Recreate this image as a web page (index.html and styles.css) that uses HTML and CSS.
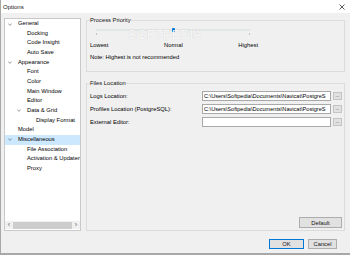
FILE: index.html
```html
<!DOCTYPE html>
<html lang="en">
<head>
  <meta charset="UTF-8">
  <title>Options</title>
  <link rel="stylesheet" href="styles.css">
</head>
<body>
  <div class="window">
    <div class="titlebar">
      <span class="title">Options</span>
      <svg class="close" width="6" height="6" viewBox="0 0 6 6">
        <path d="M0.5 0.5 L5.5 5.5 M5.5 0.5 L0.5 5.5" stroke="#333" stroke-width="0.8" fill="none"/>
      </svg>
    </div>

    <div class="content">
      <div class="tree">
        <div class="tree-items">
          <div class="row lvl0"><span class="chev"><svg width="4" height="3" viewBox="0 0 4 3"><path d="M0.3 0.5 L2 2.4 L3.7 0.5" stroke="#555" stroke-width="0.6" fill="none"/></svg></span>General</div>
          <div class="row lvl1"><span class="chev"></span>Docking</div>
          <div class="row lvl1"><span class="chev"></span>Code Insight</div>
          <div class="row lvl1"><span class="chev"></span>Auto Save</div>
          <div class="row lvl0"><span class="chev"><svg width="4" height="3" viewBox="0 0 4 3"><path d="M0.3 0.5 L2 2.4 L3.7 0.5" stroke="#555" stroke-width="0.6" fill="none"/></svg></span>Appearance</div>
          <div class="row lvl1"><span class="chev"></span>Font</div>
          <div class="row lvl1"><span class="chev"></span>Color</div>
          <div class="row lvl1"><span class="chev"></span>Main Window</div>
          <div class="row lvl1"><span class="chev"></span>Editor</div>
          <div class="row lvl1"><span class="chev"><svg width="4" height="3" viewBox="0 0 4 3"><path d="M0.3 0.5 L2 2.4 L3.7 0.5" stroke="#555" stroke-width="0.6" fill="none"/></svg></span>Data &amp; Grid</div>
          <div class="row lvl2"><span class="chev"></span>Display Format</div>
          <div class="row lvl0"><span class="chev"></span>Model</div>
          <div class="row lvl0 selected"><span class="chev"><svg width="4" height="3" viewBox="0 0 4 3"><path d="M0.3 0.5 L2 2.4 L3.7 0.5" stroke="#555" stroke-width="0.6" fill="none"/></svg></span>Miscellaneous</div>
          <div class="row lvl1"><span class="chev"></span>File Association</div>
          <div class="row lvl1"><span class="chev"></span>Activation &amp; Updater</div>
          <div class="row lvl1"><span class="chev"></span>Proxy</div>
        </div>
        <div class="hscroll">
          <span class="arrow">&#8249;</span>
          <span class="thumb"></span>
          <span class="arrow">&#8250;</span>
        </div>
      </div>

      <div class="settings">
        <fieldset class="group priority">
          <legend>Process Priority</legend>
          <div class="slider">
            <span class="knob"></span>
          </div>
          <div class="ticks"><span></span><span></span></div>
          <div class="levels">
            <span>Lowest</span>
            <span>Normal</span>
            <span>Highest</span>
          </div>
          <div class="note">Note: Highest is not recommended</div>
          <div class="watermark">SOFTPEDIA</div>
        </fieldset>

        <fieldset class="group files">
          <legend>Files Location</legend>
          <div class="paths">
            <label>Logs Location:</label>
            <div class="field">C:\Users\Softpedia\Documents\Navicat\PostgreS</div>
            <button class="dots">...</button>

            <label>Profiles Location (PostgreSQL):</label>
            <div class="field">C:\Users\Softpedia\Documents\Navicat\PostgreS</div>
            <button class="dots">...</button>

            <label>External Editor:</label>
            <div class="field"></div>
            <button class="dots">...</button>
          </div>
          <button class="btn default">Default</button>
        </fieldset>
      </div>
    </div>

    <div class="footer">
      <button class="btn ok">OK</button>
      <button class="btn cancel">Cancel</button>
    </div>
  </div>
</body>
</html>
```

FILE: styles.css
```css
/* dialog frame */
body {
  margin: 0;
  background: #f0f0f0;
  font-family: "Liberation Sans", Arial, sans-serif;
  font-size: 5.8px;
  color: #000;
}

.window {
  width: 350px;
  height: 255px;
  box-sizing: border-box;
  border-left: 1px solid #a8a8a8;
  border-bottom: 2px solid #a8a8a8;
  background: #f0f0f0;
  display: flex;
  flex-direction: column;
}

.titlebar {
  height: 13px;
  flex-shrink: 0;
  background: #fff;
  display: flex;
  align-items: center;
  justify-content: space-between;
  padding: 0 5px 0 2px;
}

.title {
  font-size: 6px;
  color: #111;
}

.content {
  flex: 1;
  display: flex;
  gap: 5px;
  padding: 3px 6px 0 3px;
  min-height: 0;
}

/* navigation tree */
.tree {
  width: 77px;
  height: 213px;
  margin-top: 2px;
  box-sizing: border-box;
  background: #fff;
  border: 1px solid #c9c9c9;
  display: flex;
  flex-direction: column;
  flex-shrink: 0;
}

.tree-items {
  flex: 1;
  padding-top: 0.2px;
}

.row {
  height: 9.65px;
  line-height: 9.65px;
  display: flex;
  align-items: center;
  white-space: nowrap;
  overflow: hidden;
}

.row.selected {
  background: #cce8ff;
}

.chev {
  width: 12px;
  flex-shrink: 0;
  display: flex;
  align-items: center;
  padding-left: 1.5px;
  box-sizing: border-box;
}

.lvl0 { padding-left: 1px; }
.lvl1 { padding-left: 10px; }
.lvl2 { padding-left: 19px; }

.hscroll {
  height: 8px;
  margin-bottom: 1px;
  background: #f0f0f0;
  display: flex;
  align-items: center;
}

.hscroll .arrow {
  width: 8px;
  text-align: center;
  font-size: 7px;
  line-height: 8px;
  color: #606060;
}

.hscroll .thumb {
  flex: 1;
  height: 7px;
  background: #cdcdcd;
}

/* right side */
.settings {
  flex: 1;
  display: flex;
  flex-direction: column;
  gap: 7px;
  height: 215px;
}

.group {
  margin: 0;
  border: 1px solid #dcdcdc;
  padding: 0 2px 0 3px;
  min-width: 0;
  position: relative;
}

.group legend {
  padding: 0;
  line-height: 8px;
  color: #111;
}

.priority {
  padding-bottom: 10px;
}

.slider {
  position: relative;
  margin: 5px 0 0 6px;
  width: 154px;
  height: 2px;
  background: #e3e6e6;
}

.knob {
  position: absolute;
  left: 76px;
  top: -1px;
  width: 2.5px;
  height: 4px;
  border-radius: 1px;
  background: #0078d7;
}

.ticks {
  display: flex;
  justify-content: space-between;
  width: 154px;
  margin: 2px 0 0 6px;
}

.ticks span {
  width: 1px;
  height: 2px;
  background: #c4c4c4;
}

.levels {
  display: flex;
  justify-content: space-between;
  width: 168px;
  margin-top: 6px;
  line-height: 8px;
}

.note {
  margin-top: 4px;
  line-height: 8px;
}

.watermark {
  position: absolute;
  left: 41px;
  top: 4px;
  font-size: 12.5px;
  letter-spacing: 0.4px;
  color: rgba(255, 255, 255, 0.9);
  text-shadow: 0 0 1px rgba(0, 0, 0, 0.18);
  pointer-events: none;
}

.files {
  flex: 1;
  display: flex;
  flex-direction: column;
  padding-bottom: 2px;
}

.paths {
  margin-top: 4px;
  display: grid;
  grid-template-columns: 110px 129px 9px;
  grid-auto-rows: 10px;
  column-gap: 2px;
  row-gap: 3px;
  align-items: center;
}

.field {
  height: 10px;
  box-sizing: border-box;
  background: #fff;
  border: 1px solid #a9a9a9;
  line-height: 8px;
  padding-left: 1px;
  font-size: 5.6px;
  white-space: nowrap;
  overflow: hidden;
}

.dots {
  width: 9px;
  height: 8px;
  padding: 0;
  border: 1px solid #c4c4c4;
  background: #e1e1e1;
  font-family: inherit;
  font-size: 4.5px;
  line-height: 4px;
  color: #333;
  overflow: hidden;
}

.btn {
  height: 11px;
  padding: 0;
  border: 1px solid #adadad;
  background: #e1e1e1;
  font-family: inherit;
  font-size: 5.8px;
  color: #111;
}

.default {
  margin-top: auto;
  align-self: flex-end;
  width: 43px;
}

.footer {
  display: flex;
  justify-content: flex-end;
  gap: 4px;
  padding: 8px 13px 0 0;
  height: 22px;
  box-sizing: border-box;
}

.ok {
  width: 35px;
  height: 10px;
  border-color: #0078d7;
}

.cancel {
  width: 29px;
  height: 10px;
}
```
